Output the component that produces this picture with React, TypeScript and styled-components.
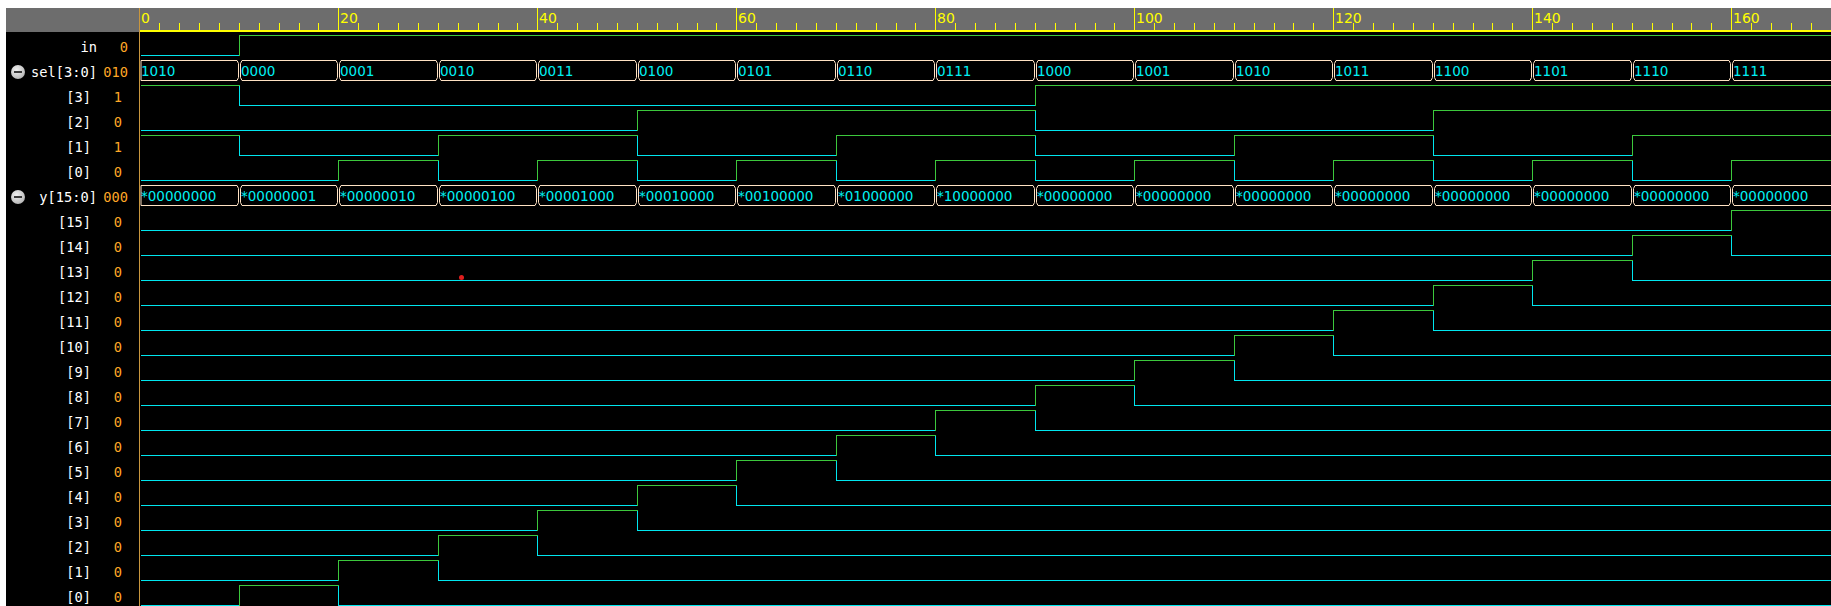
import React from "react";
import styled, { createGlobalStyle } from "styled-components";

const GlobalStyle = createGlobalStyle`
  html, body {
    margin: 0;
    padding: 0;
    background: #ffffff;
    overflow: hidden;
  }
  * { box-sizing: border-box; }
`;

const ORIGIN = 139.3;
const PX_PER_UNIT = 9.95;
const PANE_X = 140;
const WAVE_W = 1691;
const ROW_H = 25;
const HI = 2.5;
const LO = 22.5;

const C_HIGH = "#3cc83c";
const C_LOW = "#00e6ee";
const C_BUS = "#ffe2c4";
const C_BUSTEXT = "#00f0f4";

const col = (t: number) => Math.round(ORIGIN + PX_PER_UNIT * t) - PANE_X;

type Seg = { start: number; end: number; sel: number; y: number; inp: number };

const segs: Seg[] = Array.from({ length: 17 }, (_, i) => ({
  start: i * 10,
  end: i === 16 ? 180 : (i + 1) * 10,
  sel: i === 0 ? 10 : i - 1,
  inp: i === 0 ? 0 : 1,
  y: i === 0 ? 0 : 1 << (i - 1),
}));

type Row =
  | { name: string; value: string; sub?: boolean; expander?: boolean; kind: "bit"; bits: number[] }
  | { name: string; value: string; sub?: boolean; expander?: boolean; kind: "bus"; labels: string[] };

const rows: Row[] = [
  { name: "in", value: "0", kind: "bit", bits: segs.map((s) => s.inp) },
  {
    name: "sel[3:0]",
    value: "010",
    expander: true,
    kind: "bus",
    labels: segs.map((s) => s.sel.toString(2).padStart(4, "0")),
  },
  ...[3, 2, 1, 0].map<Row>((b) => ({
    name: `[${b}]`,
    value: b === 3 || b === 1 ? "1" : "0",
    sub: true,
    kind: "bit",
    bits: segs.map((s) => (s.sel >> b) & 1),
  })),
  {
    name: "y[15:0]",
    value: "000",
    expander: true,
    kind: "bus",
    labels: segs.map((s) => "*" + (s.y & 0xff).toString(2).padStart(8, "0")),
  },
  ...Array.from({ length: 16 }, (_, i) => 15 - i).map<Row>((b) => ({
    name: `[${b}]`,
    value: "0",
    sub: true,
    kind: "bit",
    bits: segs.map((s) => (s.y >> b) & 1),
  })),
];

/* ---------- layout ---------- */

const Frame = styled.div`
  display: flex;
  height: 606px;
  padding: 8px 0 0 6px;
  overflow: hidden;
  background: #ffffff;
`;

const NamePane = styled.div`
  width: 133px;
  flex: none;
  background: #000000;
  display: flex;
  flex-direction: column;
`;

const Divider = styled.div`
  width: 1px;
  flex: none;
  background: #c8963e;
`;

const WavePane = styled.div`
  flex: 1;
  position: relative;
  background: #000000;
  display: flex;
  flex-direction: column;
  overflow: hidden;
`;

const HeaderBar = styled.div`
  height: 24px;
  flex: none;
  background: #6d6d6d;
  margin-bottom: 1px;
`;

const NameRow = styled.div<{ $sub?: boolean }>`
  height: ${ROW_H}px;
  flex: none;
  display: flex;
  align-items: center;
  padding: 3px ${(p) => (p.$sub ? 17 : 11)}px 0 5px;
  font-family: "DejaVu Sans Mono", "Liberation Mono", monospace;
  font-size: 13.7px;
  white-space: nowrap;
`;

const Expander = styled.span`
  width: 14px;
  height: 14px;
  flex: none;
  border-radius: 50%;
  background: radial-gradient(circle at 40% 35%, #f0f0f0 0%, #c4c4c4 60%, #9a9a9a 100%);
  position: relative;
  margin-top: -1px;
  &::after {
    content: "";
    position: absolute;
    left: 3px;
    right: 3px;
    top: 6px;
    height: 2px;
    background: #3a3a3a;
  }
`;

const SignalName = styled.span`
  flex: 1;
  text-align: right;
  color: #ffffff;
`;

const SignalValue = styled.span`
  width: 25px;
  margin-left: 6px;
  text-align: right;
  color: #ffa726;
`;

const WaveRow = styled.div`
  height: ${ROW_H}px;
  flex: none;
  svg {
    display: block;
  }
`;

const CursorDot = styled.span`
  position: absolute;
  left: 318.5px;
  top: 267px;
  width: 5px;
  height: 5px;
  border-radius: 50%;
  background: #e01e1e;
`;

/* ---------- drawings ---------- */

const Ruler: React.FC = () => {
  const ticks: React.ReactNode[] = [];
  for (let t = 0; t <= 172; t += 2) {
    const c = col(t);
    if (c < 0 || c > WAVE_W) continue;
    const major = t % 20 === 0;
    ticks.push(
      <line
        key={`t${t}`}
        x1={c + 0.5}
        x2={c + 0.5}
        y1={major ? 0 : 15}
        y2={22}
        stroke="#ffff00"
        strokeWidth={1}
      />
    );
  }
  const labels: React.ReactNode[] = [];
  for (let t = 0; t <= 160; t += 20) {
    const c = Math.max(col(t), -1);
    labels.push(
      <text
        key={`l${t}`}
        x={c + 2}
        y={15}
        fill="#ffff00"
        fontFamily='"DejaVu Sans", Verdana, sans-serif'
        fontSize={14}
      >
        {t}
      </text>
    );
  }
  return (
    <svg width={WAVE_W} height={24} shapeRendering="crispEdges">
      {ticks}
      {labels}
      <rect x={0} y={22} width={WAVE_W} height={2} fill="#ffff00" />
    </svg>
  );
};

const BitWave: React.FC<{ bits: number[] }> = ({ bits }) => {
  const parts: React.ReactNode[] = [];
  const runs: { start: number; end: number; v: number }[] = [];
  segs.forEach((s, i) => {
    const v = bits[i];
    const last = runs[runs.length - 1];
    if (last && last.v === v) last.end = s.end;
    else runs.push({ start: s.start, end: s.end, v });
  });
  runs.forEach((r, i) => {
    const a = i === 0 ? 1 : col(r.start);
    const b = i === runs.length - 1 ? WAVE_W : col(r.end);
    const y = r.v ? HI : LO;
    const color = r.v ? C_HIGH : C_LOW;
    parts.push(<line key={`h${i}`} x1={a} x2={b + 1} y1={y} y2={y} stroke={color} strokeWidth={1} />);
    if (i > 0) {
      parts.push(
        <line key={`v${i}`} x1={a + 0.5} x2={a + 0.5} y1={HI} y2={LO} stroke={color} strokeWidth={1} />
      );
    }
  });
  return (
    <svg width={WAVE_W} height={ROW_H} shapeRendering="crispEdges">
      {parts}
    </svg>
  );
};

const busPath = (first: boolean, last: boolean, L: number, R: number) => {
  const left = first ? L : L + 1.5;
  const right = last ? R : R - 1.5;
  const d: string[] = [`M ${left} ${HI}`, `L ${right} ${HI}`];
  if (last) {
    d.push(`M ${right} ${LO}`);
  } else {
    d.push(`L ${R} ${HI + 3}`, `L ${R} ${LO - 3}`, `L ${right} ${LO}`);
  }
  d.push(`L ${left} ${LO}`);
  if (first) {
    d.push(`L ${L} ${HI}`);
  } else {
    d.push(`L ${L} ${LO - 3}`, `L ${L} ${HI + 3}`, `L ${left} ${HI}`);
  }
  return d.join(" ");
};

const BusWave: React.FC<{ labels: string[] }> = ({ labels }) => {
  return (
    <svg width={WAVE_W} height={ROW_H}>
      {segs.map((s, i) => {
        const first = i === 0;
        const last = i === segs.length - 1;
        const a = first ? 0 : col(s.start);
        const b = last ? WAVE_W + 4 : col(s.end);
        const L = first ? 1 : a + 1.5;
        const R = last ? b : b - 0.5;
        return (
          <g key={i}>
            <path d={busPath(first, last, L, R)} fill="none" stroke={C_BUS} strokeWidth={1} />
            <text
              x={first ? 1 : a + 2}
              y={18}
              fill={C_BUSTEXT}
              fontFamily='"DejaVu Sans", Verdana, sans-serif'
              fontSize={13.5}
            >
              {labels[i]}
            </text>
          </g>
        );
      })}
    </svg>
  );
};

export default function App() {
  return (
    <>
      <GlobalStyle />
      <Frame>
        <NamePane>
          <HeaderBar />
          {rows.map((r, i) => (
            <NameRow key={i} $sub={r.sub}>
              {r.expander && <Expander />}
              <SignalName>{r.name}</SignalName>
              <SignalValue>{r.value}</SignalValue>
            </NameRow>
          ))}
        </NamePane>
        <Divider />
        <WavePane>
          <HeaderBar>
            <Ruler />
          </HeaderBar>
          {rows.map((r, i) => (
            <WaveRow key={i}>
              {r.kind === "bit" ? <BitWave bits={r.bits} /> : <BusWave labels={r.labels} />}
            </WaveRow>
          ))}
          <CursorDot />
        </WavePane>
      </Frame>
    </>
  );
}
